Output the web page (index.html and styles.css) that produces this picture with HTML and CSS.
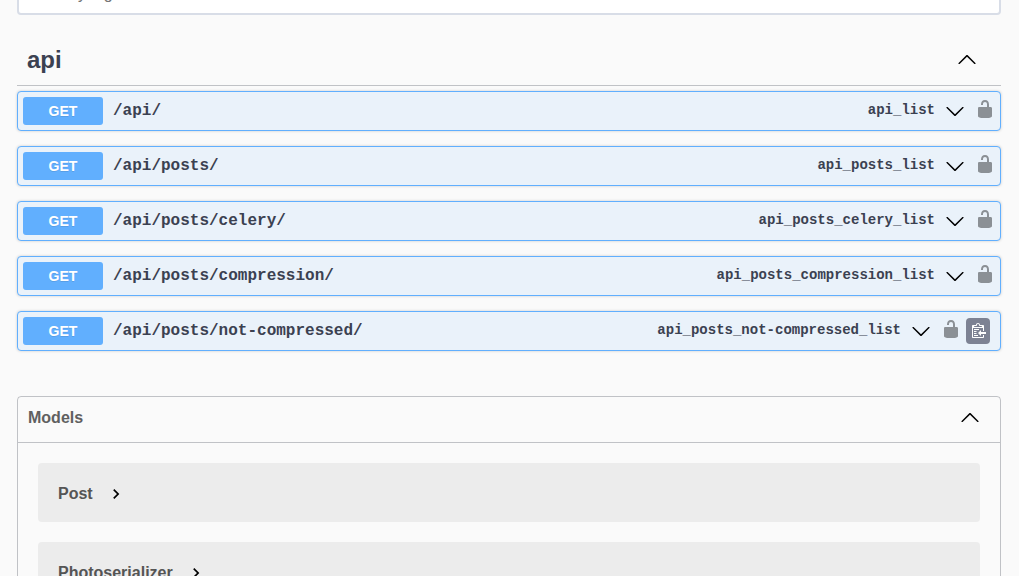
FILE: index.html
```html
<!DOCTYPE html>
<html lang="en">
<head>
<meta charset="utf-8">
<title>API</title>
<link rel="stylesheet" href="styles.css">
</head>
<body>
<svg class="defs" aria-hidden="true">
  <symbol id="arrow" viewBox="0 0 20 20"><path d="M17.418 6.109c.272-.268.709-.268.979 0s.271.701 0 .969l-7.908 7.83c-.27.268-.707.268-.979 0l-7.908-7.83c-.27-.268-.27-.701 0-.969.271-.268.709-.268.979 0L10 13.25l7.418-7.141z"/></symbol>
  <symbol id="unlocked" viewBox="0 0 20 20"><path d="M15.8 8H14V5.6C14 2.703 12.665 1 10 1 7.334 1 6 2.703 6 5.6V6h2v-.801C8 3.754 8.797 3 10 3c1.203 0 2 .754 2 2.199V8H4c-.553 0-1 .646-1 1.199V17c0 .549.428 1.139.951 1.307l1.197.387C5.672 18.861 6.55 19 7.1 19h5.8c.549 0 1.428-.139 1.951-.307l1.196-.387c.524-.167.953-.757.953-1.306V9.199C17 8.646 16.352 8 15.8 8z"/></symbol>
  <symbol id="chevron" viewBox="0 0 24 24"><path d="M10 6L8.59 7.41 13.17 12l-4.58 4.59L10 18l6-6z"/></symbol>
  <symbol id="clipboard" viewBox="0 0 16 16"><path d="M4 12h4v1H4v-1zm5-6H4v1h5V6zm2 3V7l-3 3 3 3v-2h5V9h-5zM6.5 8H4v1h2.5V8zM4 11h2.5v-1H4v1zm9 1h1v2c-.02.28-.11.52-.3.7-.19.18-.42.28-.7.3H3c-.55 0-1-.45-1-1V3c0-.55.45-1 1-1h3c0-1.11.89-2 2-2 1.11 0 2 .89 2 2h3c.55 0 1 .45 1 1v5h-1V5H3v9h10v-2zM4 4h8c0-.55-.45-1-1-1h-1c-.55 0-1-.45-1-1s-.45-1-1-1-1 .45-1 1-.45 1-1 1H5c-.55 0-1 .45-1 1z"/></symbol>
</svg>
<main class="wrapper">
  <div class="filter">Filter by tag</div>
  <section class="tag">
    <h3 class="tag-head">api<svg class="icon up"><use href="#arrow"/></svg></h3>
    <div class="ops">
      <div class="op"><span class="method">GET</span><span class="path">/api/</span><span class="op-id">api_list</span><svg class="icon arrow"><use href="#arrow"/></svg><svg class="icon lock"><use href="#unlocked"/></svg></div>
      <div class="op"><span class="method">GET</span><span class="path">/api/posts/</span><span class="op-id">api_posts_list</span><svg class="icon arrow"><use href="#arrow"/></svg><svg class="icon lock"><use href="#unlocked"/></svg></div>
      <div class="op"><span class="method">GET</span><span class="path">/api/posts/celery/</span><span class="op-id">api_posts_celery_list</span><svg class="icon arrow"><use href="#arrow"/></svg><svg class="icon lock"><use href="#unlocked"/></svg></div>
      <div class="op"><span class="method">GET</span><span class="path">/api/posts/compression/</span><span class="op-id">api_posts_compression_list</span><svg class="icon arrow"><use href="#arrow"/></svg><svg class="icon lock"><use href="#unlocked"/></svg></div>
      <div class="op with-copy"><span class="method">GET</span><span class="path">/api/posts/not-compressed/</span><span class="op-id">api_posts_not-compressed_list</span><svg class="icon arrow"><use href="#arrow"/></svg><svg class="icon lock"><use href="#unlocked"/></svg><span class="copy"><svg class="copy-icon"><use href="#clipboard"/></svg></span></div>
    </div>
  </section>
  <section class="models">
    <h4 class="models-head">Models<svg class="icon up"><use href="#arrow"/></svg></h4>
    <div class="models-list">
      <div class="model">Post<svg class="icon"><use href="#chevron"/></svg></div>
      <div class="model">Photoserializer<svg class="icon"><use href="#chevron"/></svg></div>
    </div>
  </section>
</main>
</body>
</html>
```

FILE: styles.css
```css
* { box-sizing: border-box; }
html, body { height: 100%; }
body {
  margin: 0;
  overflow: hidden;
  background: #fafafa;
  color: #3b4151;
  font-family: "Liberation Sans", Arial, sans-serif;
}
.defs { display: none; }
.wrapper {
  width: 984px;
  margin-left: 17px;
}
.icon {
  flex: none;
  width: 20px;
  height: 20px;
  fill: #000;
}
.up { transform: rotate(180deg); }
.filter {
  height: 39px;
  margin-top: -24px;
  padding: 7px 10px;
  border: 2px solid #d8dde7;
  border-radius: 4px;
  background: #fff;
  color: #757575;
  font-size: 16px;
  line-height: 18px;
}
.tag-head {
  display: flex;
  align-items: center;
  justify-content: space-between;
  height: 51px;
  margin: 20px 0 5px;
  padding: 0 24px 0 10px;
  border-bottom: 1px solid rgba(59, 65, 81, .3);
  font-size: 24px;
}
.tag-head .icon { margin-bottom: 1px; }
.ops {
  display: grid;
  gap: 15px;
}
.op {
  display: flex;
  align-items: center;
  height: 40px;
  padding: 0 5px;
  border: 1px solid #61affe;
  border-radius: 4px;
  background: #eaf2fa;
  box-shadow: 0 0 3px rgba(0, 0, 0, .19);
}
.method {
  width: 80px;
  height: 28px;
  border-radius: 3px;
  background: #61affe;
  color: #fff;
  font-size: 14px;
  font-weight: 700;
  line-height: 28px;
  text-align: center;
  text-shadow: 0 1px 0 rgba(0, 0, 0, .1);
}
.path {
  flex: 1;
  padding: 1px 10px 0;
  font: 700 16px/19px "Liberation Mono", monospace;
}
.op-id {
  padding-bottom: 2px;
  font: 700 14px/16px "Liberation Mono", monospace;
}
.arrow { margin-left: 10px; }
.lock {
  height: 20px;
  margin: 0 0 4px 10px;
  opacity: .4;
}
.with-copy { padding-right: 10px; }
.copy {
  display: flex;
  align-items: center;
  justify-content: center;
  width: 24px;
  height: 26px;
  margin-left: 5px;
  border-radius: 4px;
  background: #7d8293;
}
.copy-icon {
  width: 16px;
  height: 16px;
  fill: #fff;
}
.models {
  height: 300px;
  margin-top: 45px;
  border: 1px solid rgba(59, 65, 81, .3);
  border-radius: 4px;
}
.models-head {
  display: flex;
  align-items: center;
  justify-content: space-between;
  height: 46px;
  margin: 0;
  padding: 0 20px 4px 10px;
  border-bottom: 1px solid rgba(59, 65, 81, .3);
  color: #606060;
  font-size: 16px;
}
.models-list {
  display: grid;
  gap: 20px;
  padding: 20px;
}
.model {
  display: flex;
  align-items: center;
  gap: 13px;
  height: 59px;
  padding: 2px 20px 0;
  border-radius: 4px;
  background: #ececec;
  color: #555;
  font-size: 16px;
  font-weight: 700;
}
```
